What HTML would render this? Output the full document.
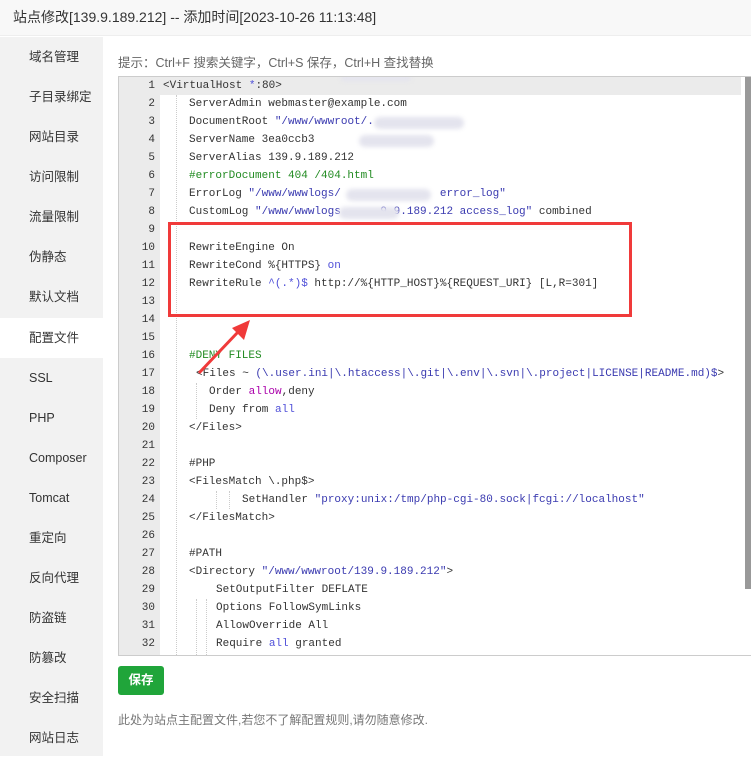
<!DOCTYPE html>
<html><head><meta charset="utf-8">
<style>
*{margin:0;padding:0;box-sizing:border-box}
body{width:751px;height:756px;overflow:hidden;background:#fff;font-family:"Liberation Sans","Noto Sans CJK SC",sans-serif;position:relative}
.hdr{position:absolute;left:0;top:0;width:751px;height:36px;background:#f8f8f8;border-bottom:1px solid #eee;font-size:14px;color:#333;line-height:34px;padding-left:13px}
.side{position:absolute;left:0;top:37px;width:103px;height:719px;background:#f2f2f2}
.side div{position:absolute;left:0;width:103px;height:40px;line-height:40px;padding-left:29px;font-size:12.5px;color:#333}
.side div.act{background:#fff}
.tip{position:absolute;left:118px;top:52px;font-size:12.5px;color:#666}
.ed{position:absolute;left:118px;top:76px;width:633px;height:580px;border:1px solid #ccc;border-right:none;overflow:hidden;background:#fff}
.gut{position:absolute;left:0;top:0;width:41px;height:580px;background:#ebebeb}
.hl{position:absolute;left:0;top:0;width:622px;height:18px;background:#ebebeb}
.ln{position:absolute;height:18px;line-height:18px;font-family:"Liberation Mono",monospace;font-size:11px;color:#333;white-space:pre}
.n{width:36px;text-align:right;color:#333}
.s{color:#3a3ab0}.c{color:#228b22}.k{color:#4f4fd8}.m{color:#a0a}
.g{position:absolute;width:0;border-left:1px dotted #ccc}
.blur{position:absolute;height:12px;background:#e4e4ee;border-radius:6px;filter:blur(2px)}
.sb{position:absolute;left:745px;top:77px;width:6px;height:512px;background:#999}
.btn{position:absolute;left:118px;top:666px;width:46px;height:29px;background:#20a53a;border-radius:3px;color:#fff;font-size:12.5px;font-weight:bold;line-height:29px;text-align:center}
.note{position:absolute;left:118px;top:711px;font-size:12px;color:#777}
</style></head><body>
<div class="hdr">站点修改[139.9.189.212] -- 添加时间[2023-10-26 11:13:48]</div>
<div class="side">
<div style="top:0">域名管理</div>
<div style="top:40px">子目录绑定</div>
<div style="top:80px">网站目录</div>
<div style="top:120px">访问限制</div>
<div style="top:160px">流量限制</div>
<div style="top:200px">伪静态</div>
<div style="top:240px">默认文档</div>
<div class="act" style="top:281px">配置文件</div>
<div style="top:321px">SSL</div>
<div style="top:361px">PHP</div>
<div style="top:401px">Composer</div>
<div style="top:441px">Tomcat</div>
<div style="top:481px">重定向</div>
<div style="top:521px">反向代理</div>
<div style="top:561px">防盗链</div>
<div style="top:601px">防篡改</div>
<div style="top:641px">安全扫描</div>
<div style="top:681px">网站日志</div>
</div>
<div class="tip">提示：Ctrl+F 搜索关键字，Ctrl+S 保存，Ctrl+H 查找替换</div>
<div class="ed">
<div class="hl"></div>
<div class="gut"></div>
<div id="code"></div>
</div>
<div class="sb"></div>
<svg style="position:absolute;left:0;top:0" width="751" height="756">
<rect x="169.5" y="223.5" width="461" height="92" fill="none" stroke="#f03a3a" stroke-width="3"/>
<line x1="199" y1="373" x2="238" y2="332" stroke="#f03a3a" stroke-width="3"/>
<polygon points="250,320 232,328 244,340" fill="#f03a3a"/>
</svg>
<div class="btn">保存</div>
<div class="note">此处为站点主配置文件,若您不了解配置规则,请勿随意修改.</div>
<script>
var L=[
[0,'&lt;VirtualHost <span class="k">*</span>:80&gt;'],
[26,'ServerAdmin webmaster@example.com'],
[26,'DocumentRoot <span class="s">"/www/wwwroot/.</span>'],
[26,'ServerName 3ea0ccb3'],
[26,'ServerAlias 139.9.189.212'],
[26,'<span class="c">#errorDocument 404 /404.html</span>'],
[26,'ErrorLog <span class="s">"/www/wwwlogs/               error_log"</span>'],
[26,'CustomLog <span class="s">"/www/wwwlogs      9.9.189.212 access_log"</span> combined'],
[26,''],
[26,'RewriteEngine On'],
[26,'RewriteCond %{HTTPS} <span class="k">on</span>'],
[26,'RewriteRule <span class="k">^(.*)$</span> http://%{HTTP_HOST}%{REQUEST_URI} [L,R=301]'],
[26,''],[26,''],[26,''],
[26,'<span class="c">#DENY FILES</span>'],
[33,'&lt;Files ~ <span class="s">(\\.user.ini|\\.htaccess|\\.git|\\.env|\\.svn|\\.project|LICENSE|README.md)$</span>&gt;'],
[46,'Order <span class="m">allow</span>,deny'],
[46,'Deny from <span class="k">all</span>'],
[26,'&lt;/Files&gt;'],
[26,''],
[26,'#PHP'],
[26,'&lt;FilesMatch \\.php$&gt;'],
[79,'SetHandler <span class="s">"proxy:unix:/tmp/php-cgi-80.sock|fcgi://localhost"</span>'],
[26,'&lt;/FilesMatch&gt;'],
[26,''],
[26,'#PATH'],
[26,'&lt;Directory <span class="s">"/www/wwwroot/139.9.189.212"</span>&gt;'],
[53,'SetOutputFilter DEFLATE'],
[53,'Options FollowSymLinks'],
[53,'AllowOverride All'],
[53,'Require <span class="k">all</span> granted']
];
var h='';
for(var i=0;i<L.length;i++){var t=i*18;
h+='<div class="ln n" style="left:0;top:'+t+'px">'+(i+1)+'</div>';
h+='<div class="ln" style="left:'+(44+L[i][0])+'px;top:'+t+'px">'+L[i][1]+'</div>';}
h+='<div class="g" style="left:57px;top:18px;height:560px"></div>';
h+='<div class="g" style="left:77px;top:306px;height:36px"></div>';
h+='<div class="g" style="left:97px;top:414px;height:18px"></div>';
h+='<div class="g" style="left:110px;top:414px;height:18px"></div>';
h+='<div class="g" style="left:77px;top:522px;height:60px"></div>';
h+='<div class="g" style="left:87px;top:522px;height:60px"></div>';
h+='<div class="blur" style="left:255px;top:40px;width:90px"></div>';
h+='<div class="blur" style="left:240px;top:58px;width:75px"></div>';
h+='<div class="blur" style="left:227px;top:112px;width:85px"></div>';
h+='<div class="blur" style="left:220px;top:130px;width:60px"></div>';
h+='<div class="blur" style="left:222px;top:-2px;width:70px;height:6px"></div>';
document.getElementById('code').innerHTML=h;
</script>
</body></html>
